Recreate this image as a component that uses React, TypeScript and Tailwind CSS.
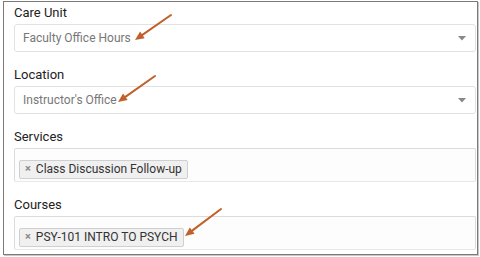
import React from "react";

const font = { fontFamily: "Roboto, 'Liberation Sans', sans-serif" };

function Caret() {
  return (
    <svg width="8" height="5" viewBox="0 0 8 5" className="absolute right-[9px] top-[11px]">
      <path d="M0 0 L8 0 L4 4.5 Z" fill="#888" />
    </svg>
  );
}

function Select({ value }: { value: string }) {
  return (
    <div className="relative h-[28px] rounded-[3px] border border-[#e2e2e2] bg-white pl-[8px] text-[12px] leading-[26px] text-[#777]">
      {value}
      <Caret />
    </div>
  );
}

function Tag({ text }: { text: string }) {
  return (
    <span className="inline-flex h-[19px] items-center rounded-[2px] border border-[#cfcfcf] bg-[#f0f0f0] pl-[5px] pr-[5px] text-[12px] text-[#333]">
      <span className="mr-[5px] text-[11px] font-bold text-[#888]">×</span>
      {text}
    </span>
  );
}

function Multi({ text }: { text: string }) {
  return (
    <div className="h-[34px] rounded-[2px] border border-[#dcdcdc] border-b-[#e8e8e8] bg-[#fdfdfd] pl-[4px] pt-[6px]">
      <Tag text={text} />
    </div>
  );
}

function Label({ children }: { children: React.ReactNode }) {
  return <div className="h-[20px] text-[13px] leading-[18px] text-[#222]">{children}</div>;
}

function Arrow({ x1, y1, x2, y2 }: { x1: number; y1: number; x2: number; y2: number }) {
  const dx = x2 - x1;
  const dy = y2 - y1;
  const len = Math.sqrt(dx * dx + dy * dy);
  const ux = dx / len;
  const uy = dy / len;
  const hl = 9;
  const hw = 4;
  const bx = x2 - ux * hl;
  const by = y2 - uy * hl;
  const p1 = `${bx - uy * hw},${by + ux * hw}`;
  const p2 = `${bx + uy * hw},${by - ux * hw}`;
  return (
    <g>
      <line x1={x1} y1={y1} x2={bx} y2={by} stroke="#c0602a" strokeWidth="2" strokeLinecap="round" />
      <polygon points={`${x2},${y2} ${p1} ${p2}`} fill="#c0602a" />
    </g>
  );
}

export default function App() {
  return (
    <div className="relative h-[257px] w-[480px] bg-white" style={font}>
      <div className="ml-[3px] mt-[1px] h-[254px] w-[475px] border border-[#7a7a7a] pl-[10px] pr-[1px] pt-[2px] shadow-[1px_1px_0_#c8c8c8]">
        <Label>Care Unit</Label>
        <Select value="Faculty Office Hours" />
        <div className="h-[14px]" />
        <Label>Location</Label>
        <Select value="Instructor's Office" />
        <div className="h-[14px]" />
        <Label>Services</Label>
        <Multi text="Class Discussion Follow-up" />
        <div className="h-[14px]" />
        <Label>Courses</Label>
        <Multi text="PSY-101 INTRO TO PSYCH" />
      </div>
      <svg className="pointer-events-none absolute left-0 top-0" width="480" height="257">
        <Arrow x1={171} y1={14} x2={135} y2={39} />
        <Arrow x1={155} y1={75} x2={118} y2={101} />
        <Arrow x1={221} y1={208} x2={185} y2={235} />
      </svg>
    </div>
  );
}
